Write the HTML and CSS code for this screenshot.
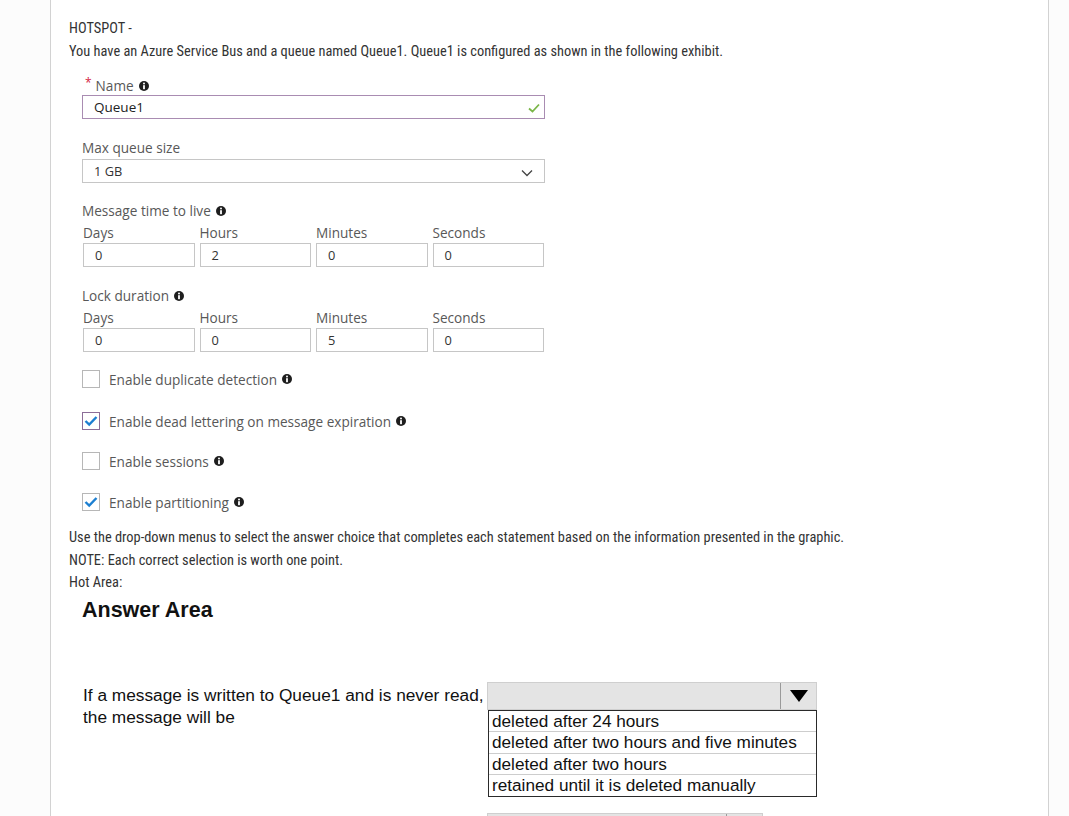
FILE: index.html
```html
<!DOCTYPE html>
<html>
<head>
<meta charset="utf-8">
<link rel="stylesheet" href="styles.css">
</head>
<body>
<div class="card">
  <p class="q">HOTSPOT -</p>
  <p class="q">You have an Azure Service Bus and a queue named Queue1. Queue1 is configured as shown in the following exhibit.</p>

  <div class="exhibit">
    <div class="lbl lbl-name"><span class="req">*</span> Name <svg class="info" viewBox="0 0 10 10"><circle cx="5" cy="5" r="5"/><rect x="4.1" y="4.2" width="1.8" height="4" fill="#fff"/><circle cx="5" cy="2.6" r="1" fill="#fff"/></svg></div>
    <div class="box box-name">Queue1
      <svg class="ok" viewBox="0 0 12 10"><path d="M1 5.5 L4.5 8.5 L11 1.5" fill="none" stroke="#7ab648" stroke-width="1.8"/></svg>
    </div>

    <div class="lbl lbl-max">Max queue size</div>
    <div class="box box-sel">1 GB
      <svg class="chev" viewBox="0 0 12 8"><path d="M1 1.5 L6 6.5 L11 1.5" fill="none" stroke="#444" stroke-width="1.3"/></svg>
    </div>

    <div class="lbl lbl-grp">Message time to live <svg class="info" viewBox="0 0 10 10"><circle cx="5" cy="5" r="5"/><rect x="4.1" y="4.2" width="1.8" height="4" fill="#fff"/><circle cx="5" cy="2.6" r="1" fill="#fff"/></svg></div>
    <div class="quad">
      <div class="cell"><div class="sub">Days</div><div class="box">0</div></div>
      <div class="cell"><div class="sub">Hours</div><div class="box">2</div></div>
      <div class="cell"><div class="sub">Minutes</div><div class="box">0</div></div>
      <div class="cell"><div class="sub">Seconds</div><div class="box">0</div></div>
    </div>

    <div class="lbl lbl-grp lbl-lock">Lock duration <svg class="info" viewBox="0 0 10 10"><circle cx="5" cy="5" r="5"/><rect x="4.1" y="4.2" width="1.8" height="4" fill="#fff"/><circle cx="5" cy="2.6" r="1" fill="#fff"/></svg></div>
    <div class="quad">
      <div class="cell"><div class="sub">Days</div><div class="box">0</div></div>
      <div class="cell"><div class="sub">Hours</div><div class="box">0</div></div>
      <div class="cell"><div class="sub">Minutes</div><div class="box">5</div></div>
      <div class="cell"><div class="sub">Seconds</div><div class="box">0</div></div>
    </div>

    <div class="checks">
      <div class="chk"><span class="cb"></span>Enable duplicate detection <svg class="info" viewBox="0 0 10 10"><circle cx="5" cy="5" r="5"/><rect x="4.1" y="4.2" width="1.8" height="4" fill="#fff"/><circle cx="5" cy="2.6" r="1" fill="#fff"/></svg></div>
      <div class="chk chk-2"><span class="cb cb-focus"><svg viewBox="0 0 14 12"><path d="M1.5 6 L5.2 9.6 L12.5 2" fill="none" stroke="#1c7fd1" stroke-width="2.4"/></svg></span>Enable dead lettering on message expiration <svg class="info" viewBox="0 0 10 10"><circle cx="5" cy="5" r="5"/><rect x="4.1" y="4.2" width="1.8" height="4" fill="#fff"/><circle cx="5" cy="2.6" r="1" fill="#fff"/></svg></div>
      <div class="chk"><span class="cb"></span>Enable sessions <svg class="info" viewBox="0 0 10 10"><circle cx="5" cy="5" r="5"/><rect x="4.1" y="4.2" width="1.8" height="4" fill="#fff"/><circle cx="5" cy="2.6" r="1" fill="#fff"/></svg></div>
      <div class="chk"><span class="cb"><svg viewBox="0 0 14 12"><path d="M1.5 6 L5.2 9.6 L12.5 2" fill="none" stroke="#1c7fd1" stroke-width="2.4"/></svg></span>Enable partitioning <svg class="info" viewBox="0 0 10 10"><circle cx="5" cy="5" r="5"/><rect x="4.1" y="4.2" width="1.8" height="4" fill="#fff"/><circle cx="5" cy="2.6" r="1" fill="#fff"/></svg></div>
    </div>
  </div>

  <p class="q q-use">Use the drop-down menus to select the answer choice that completes each statement based on the information presented in the graphic.</p>
  <p class="q q-tight">NOTE: Each correct selection is worth one point.</p>
  <p class="q q-tight">Hot Area:</p>

  <div class="answer">
    <h2 class="aa">Answer Area</h2>
    <div class="stmt">
      <div class="stmt-text">If a message is written to Queue1 and is never read,<br>the message will be</div>
      <div class="dd">
        <div class="dd-head"><span class="dd-val"></span><span class="dd-btn"><svg viewBox="0 0 18 12"><path d="M0 0 H18 L9 12 Z" fill="#000"/></svg></span></div>
        <ul class="opts">
          <li>deleted after 24 hours</li>
          <li>deleted after two hours and five minutes</li>
          <li>deleted after two hours</li>
          <li>retained until it is deleted manually</li>
        </ul>
      </div>
    </div>
    <div class="stmt stmt-2">
      <div class="stmt-text">If a message is not processed within the lock duration,<br>the message will be</div>
      <div class="dd dd-2">
        <div class="dd-head"><span class="dd-val"></span><span class="dd-btn"><svg viewBox="0 0 18 12"><path d="M0 0 H18 L9 12 Z" fill="#000"/></svg></span></div>
      </div>
    </div>
  </div>
</div>
</body>
</html>
```

FILE: styles.css
```css
html, body {
  margin: 0;
  padding: 0;
  background: #fcfcfc;
  height: 100%;
  overflow: hidden;
}

.card {
  margin-left: 50px;
  width: 999px;
  min-height: 100%;
  background: #fff;
  border-left: 1px solid #d2d2d2;
  border-right: 1px solid #d2d2d2;
  padding: 17px 0 0 18px;
  box-sizing: border-box;
}

.q {
  margin: 0;
  font-family: "Liberation Sans Narrow", "Roboto Condensed", Roboto, sans-serif;
  font-size: 14.4px;
  line-height: 23px;
  color: #333;
}

.q-use { margin-top: 15px; line-height: 22.5px; }
.q-tight { line-height: 22.5px; }

/* ---------- exhibit ---------- */
.exhibit {
  margin: 15px 0 0 13px;
  width: 463px;
  font-family: "Open Sans", "Noto Sans", sans-serif;
  font-size: 13.6px;
  color: #585858;
}

.lbl {
  line-height: 16px;
  height: 16px;
  display: flex;
  align-items: center;
  gap: 5px;
}
.lbl-name { padding-left: 3px; margin-bottom: 1px; }
.lbl-max { margin-top: 21px; margin-bottom: 3px; }
.lbl-grp { margin-top: 20px; margin-bottom: 6px; }
.lbl-lock { margin-top: 21px; }

.req { color: #d4213d; font-size: 12px; margin-right: -1px; align-self: flex-start; line-height: 10px; height: 10px; }

.info { width: 10px; height: 10px; fill: #1e1e1e; flex: none; }

.box {
  height: 24px;
  box-sizing: border-box;
  border: 1px solid #c6c6c6;
  padding-left: 11px;
  line-height: 22px;
  color: #333;
  font-size: 12.8px;
  position: relative;
}
.box-name {
  border-color: #a98cb2;
  color: #222;
  font-size: 13.5px;
}
.box-sel { color: #333; }

.ok { position: absolute; right: 4px; top: 7px; width: 12px; height: 10px; }
.chev { position: absolute; right: 11px; top: 9px; width: 12px; height: 8px; }

.quad {
  display: grid;
  grid-template-columns: repeat(4, 111.5px);
  column-gap: 5px;
  margin-left: 1px;
}
.sub { line-height: 16px; margin-bottom: 2px; }
.cell .box { padding-left: 11px; }

.checks { margin-top: 17px; display: flex; flex-direction: column; gap: 21px; }
.chk {
  height: 20px;
  display: flex;
  align-items: center;
  gap: 5px;
  color: #585858;
  font-size: 13.6px;
}
.chk-2 { margin-top: 1px; margin-bottom: -1px; }
.chk .cb {
  width: 18px;
  height: 18px;
  box-sizing: border-box;
  border: 1px solid #b7b7b7;
  margin-right: 4px;
  flex: none;
  display: flex;
  align-items: center;
  justify-content: center;
}
.chk .cb svg { width: 14px; height: 12px; }
.chk .cb-focus { border-color: #8c6d98; }

/* ---------- answer area ---------- */
.answer {
  margin-left: 13px;
  font-family: "Liberation Sans", Arial, sans-serif;
  color: #111;
}
.aa {
  margin: 2px 0 0 0;
  font-size: 21.5px;
  line-height: 26px;
  font-weight: bold;
  color: #111;
}

.stmt {
  display: flex;
  margin-top: 59px;
}
.stmt-2 { margin-top: 16px; }
.stmt-text {
  width: 404px;
  margin-left: 1px;
  padding-top: 2px;
  font-size: 17.3px;
  line-height: 22px;
}
.dd { width: 330px; }
.dd-2 { width: 276px; }
.dd-head {
  height: 28px;
  box-sizing: border-box;
  background: #e4e4e4;
  border: 1px solid #cfcfcf;
  display: flex;
}
.dd-val { flex: 1; }
.dd-btn {
  width: 35px;
  border-left: 1px solid #9a9a9a;
  display: flex;
  align-items: center;
  justify-content: center;
}
.dd-btn svg { width: 18px; height: 12px; }

.opts {
  list-style: none;
  margin: 0 0 0 1px;
  padding: 0;
  width: 329px;
  box-sizing: border-box;
  border: 1px solid #2a2a2a;
}
.opts li {
  height: 20.5px;
  line-height: 21.5px;
  padding-left: 3px;
  font-size: 17.2px;
  color: #111;
  border-top: 1px solid #cdcdcd;
  white-space: nowrap;
}
.opts li:first-child { border-top: none; }
```
